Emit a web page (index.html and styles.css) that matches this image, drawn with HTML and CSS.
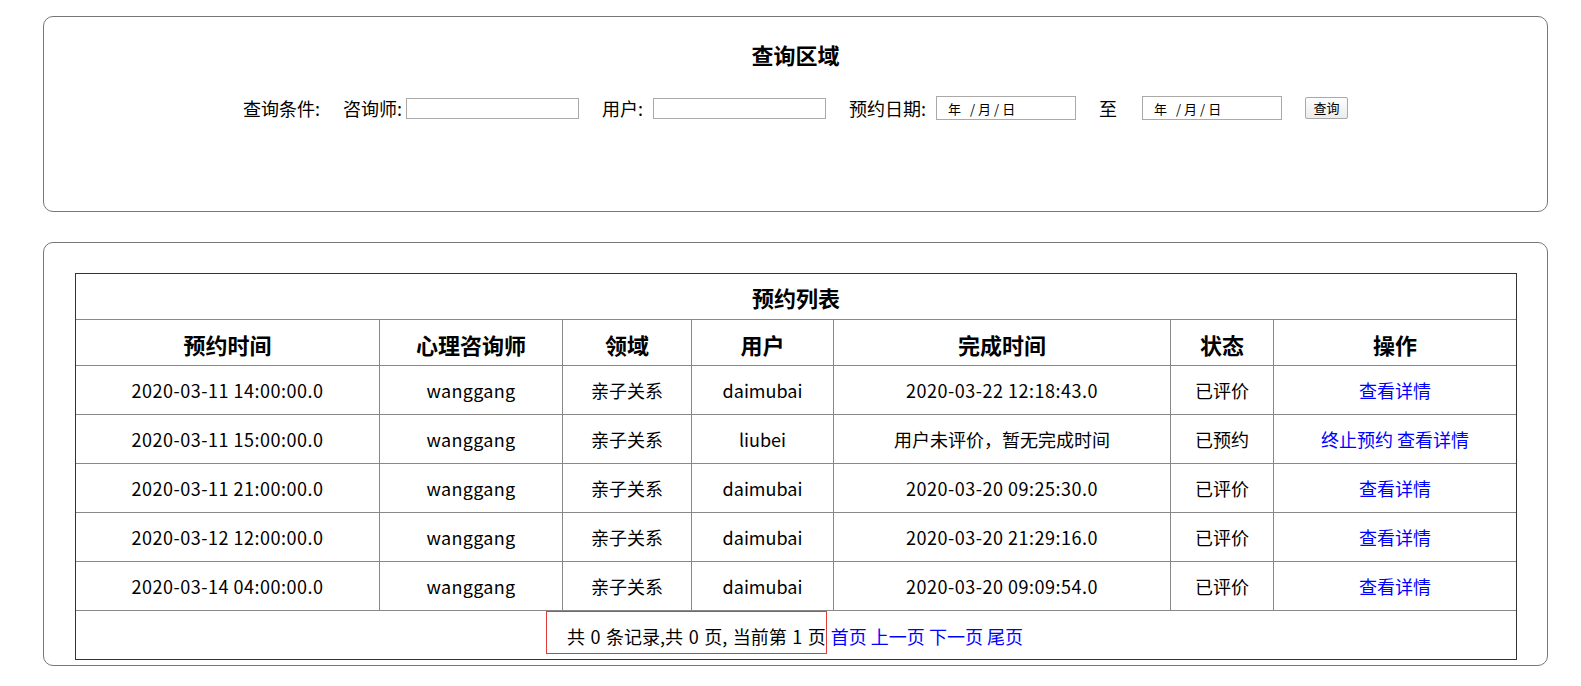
FILE: index.html
```html
<!DOCTYPE html>
<html lang="zh-CN">
<head>
<meta charset="utf-8">
<title>预约列表</title>
<link rel="stylesheet" href="styles.css">
</head>
<body>
<div class="page">
  <section class="panel query-panel">
    <h3 class="panel-title">查询区域</h3>
    <form class="query-row">
      <span class="label">查询条件:</span>
      <span class="label sep">咨询师:</span>
      <input class="text-input after-tight" type="text">
      <span class="label sep">用户:</span>
      <input class="text-input after-label" type="text">
      <span class="label sep">预约日期:</span>
      <span class="date-input after-label">年 /月/日</span>
      <span class="label sep">至</span>
      <span class="date-input sep-wide">年 /月/日</span>
      <button class="query-btn sep" type="button">查询</button>
    </form>
  </section>

  <section class="panel list-panel">
    <table class="list-table">
      <tr class="caption-row">
        <th colspan="7">预约列表</th>
      </tr>
      <tr class="head-row">
        <th class="col-time">预约时间</th>
        <th class="col-counselor">心理咨询师</th>
        <th class="col-field">领域</th>
        <th class="col-user">用户</th>
        <th class="col-done">完成时间</th>
        <th class="col-state">状态</th>
        <th class="col-op">操作</th>
      </tr>
      <tr class="data-row">
        <td class="time">2020-03-11 14:00:00.0</td>
        <td class="name">wanggang</td>
        <td>亲子关系</td>
        <td>daimubai</td>
        <td class="time">2020-03-22 12:18:43.0</td>
        <td>已评价</td>
        <td><a class="link" href="#">查看详情</a></td>
      </tr>
      <tr class="data-row">
        <td class="time">2020-03-11 15:00:00.0</td>
        <td class="name">wanggang</td>
        <td>亲子关系</td>
        <td>liubei</td>
        <td>用户未评价，暂无完成时间</td>
        <td>已预约</td>
        <td><a class="link" href="#">终止预约</a> <a class="link" href="#">查看详情</a></td>
      </tr>
      <tr class="data-row">
        <td class="time">2020-03-11 21:00:00.0</td>
        <td class="name">wanggang</td>
        <td>亲子关系</td>
        <td>daimubai</td>
        <td class="time">2020-03-20 09:25:30.0</td>
        <td>已评价</td>
        <td><a class="link" href="#">查看详情</a></td>
      </tr>
      <tr class="data-row">
        <td class="time">2020-03-12 12:00:00.0</td>
        <td class="name">wanggang</td>
        <td>亲子关系</td>
        <td>daimubai</td>
        <td class="time">2020-03-20 21:29:16.0</td>
        <td>已评价</td>
        <td><a class="link" href="#">查看详情</a></td>
      </tr>
      <tr class="data-row">
        <td class="time">2020-03-14 04:00:00.0</td>
        <td class="name">wanggang</td>
        <td>亲子关系</td>
        <td>daimubai</td>
        <td class="time">2020-03-20 09:09:54.0</td>
        <td>已评价</td>
        <td><a class="link" href="#">查看详情</a></td>
      </tr>
      <tr class="foot-row">
        <td colspan="7"><span class="page-info">共 0 条记录,共 0 页, 当前第 1 页</span> <a class="link" href="#">首页</a> <a class="link" href="#">上一页</a> <a class="link" href="#">下一页</a> <a class="link" href="#">尾页</a></td>
      </tr>
    </table>
  </section>
</div>
</body>
</html>
```

FILE: styles.css
```css
* {
  box-sizing: border-box;
}

body {
  margin: 0;
  background: #fff;
  color: #000;
  font-family: "Noto Sans CJK SC", "Noto Sans", sans-serif;
}

.page {
  padding: 16px 0 0 43px;
}

.panel {
  width: 1505px;
  border: 1px solid #777;
  border-radius: 10px;
  background: #fff;
}

/* ---------- query area ---------- */
.query-panel {
  height: 196px;
  padding-top: 22px;
}

.panel-title {
  margin: 0;
  font-size: 22px;
  line-height: 30px;
  font-weight: bold;
  text-align: center;
}

.query-row {
  display: flex;
  justify-content: center;
  align-items: center;
  height: 24px;
  margin: 27px 0 0;
  font-size: 18px;
}

.label {
  line-height: 24px;
  white-space: nowrap;
}

.sep {
  margin-left: 23px;
}

.sep-wide {
  margin-left: 25px;
}

.after-tight {
  margin-left: 4px;
}

.after-label {
  margin-left: 10px;
}

.text-input {
  width: 173px;
  height: 21px;
  border: 1px solid #a9a9a9;
  padding: 1px 2px;
  font-size: 13px;
  background: #fff;
}

.date-input {
  display: inline-flex;
  align-items: center;
  width: 140px;
  height: 24px;
  padding-left: 11px;
  border: 1px solid #a9a9a9;
  font-size: 13px;
  letter-spacing: 3px;
  word-spacing: 0;
  white-space: pre;
  color: #000;
}

.query-btn {
  width: 43px;
  height: 22px;
  padding: 0;
  border: 1px solid #a9a9a9;
  border-radius: 2px;
  background: linear-gradient(#fdfdfd, #ececec);
  font-family: inherit;
  font-size: 13px;
  line-height: 18px;
  color: #000;
}

/* ---------- list area ---------- */
.list-panel {
  height: 424px;
  margin-top: 30px;
  padding: 30px 30px 5px 31px;
}

.list-table {
  width: 1442px;
  border: 1px solid #333;
  border-collapse: separate;
  border-spacing: 0;
  table-layout: auto;
}

.list-table th,
.list-table td {
  padding: 0;
  text-align: center;
  vertical-align: middle;
  border-left: 1px solid #888;
  border-top: 1px solid #888;
}

.list-table tr > :first-child {
  border-left: none;
}

.caption-row th {
  border-top: none;
  height: 45px;
  font-size: 22px;
  font-weight: bold;
}

.head-row th {
  height: 46px;
  font-size: 22px;
  font-weight: bold;
  padding-top: 2px;
}

.data-row td {
  height: 49px;
  font-size: 18px;
}

.data-row .time {
  letter-spacing: 0.5px;
}

.data-row .name {
  letter-spacing: 0.3px;
}

.col-time { width: 303px; }
.col-counselor { width: 183px; }
.col-field { width: 129px; }
.col-user { width: 142px; }
.col-done { width: 337px; }
.col-state { width: 103px; }
.col-op { width: 243px; }

.link {
  color: #00f;
  text-decoration: none;
}

.foot-row td {
  height: 49px;
  font-size: 18px;
  line-height: 27px;
  vertical-align: top;
  padding-right: 23px;
}

.page-info {
  display: inline-block;
  border: 1px solid #e03c3c;
  padding: 11px 0 3px 20px;
  line-height: 27px;
  word-spacing: 1.5px;
}
```
